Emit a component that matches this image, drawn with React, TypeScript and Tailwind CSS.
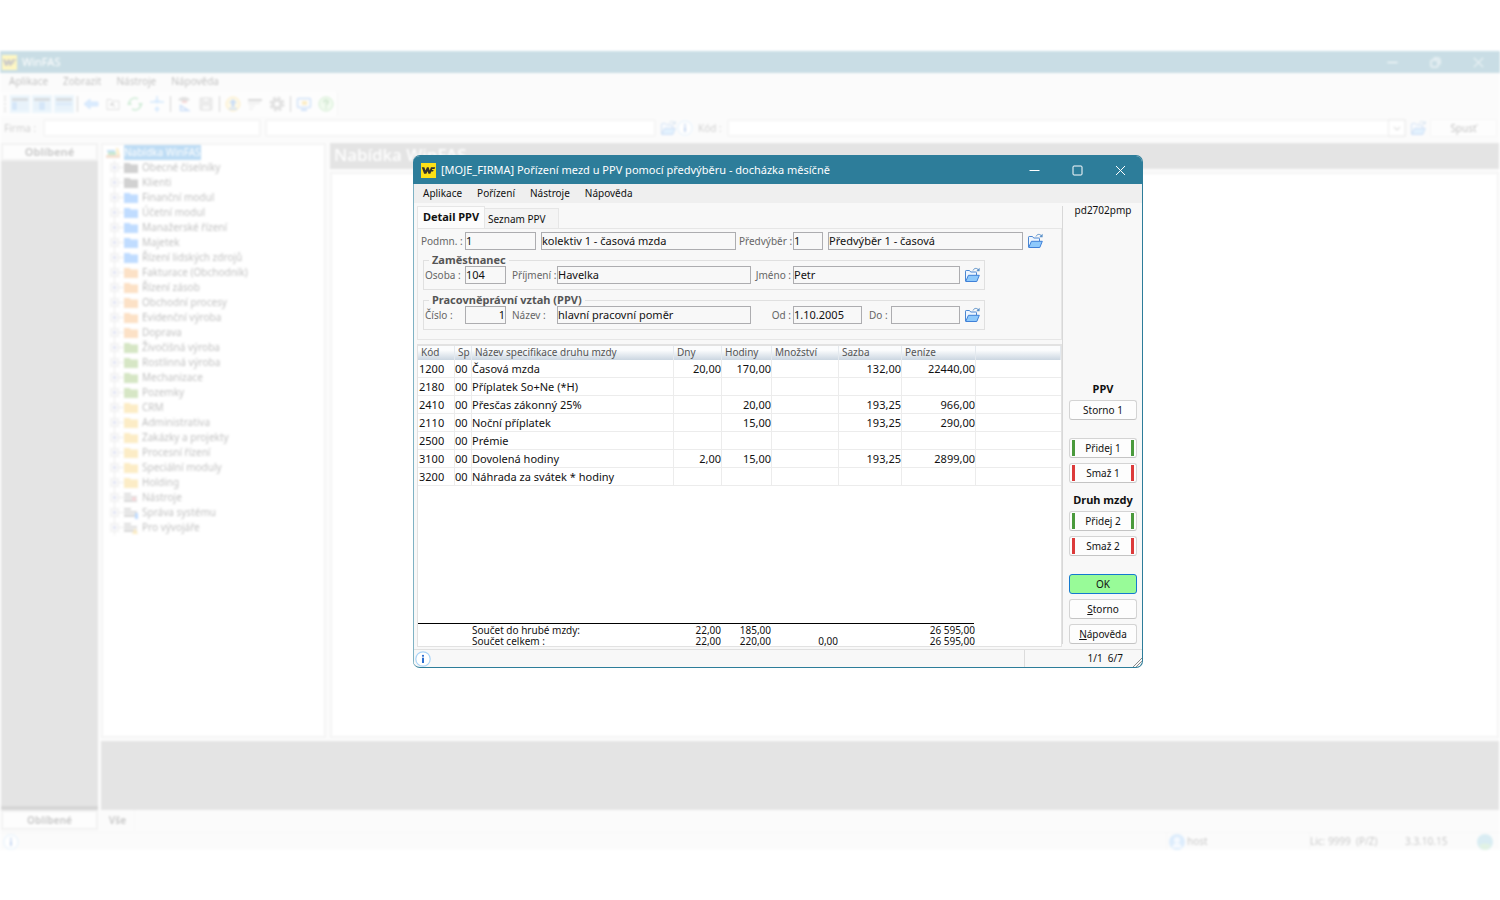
import React from "react";

function Logo({ className }: { className: string }) {
  return (
    <svg viewBox="0 0 16 16" className={className} aria-hidden="true">
      <rect width="16" height="16" fill="#fde016" />
      <path
        d="M.8 4.500h2.800l1.200 3.600 1.500-3.600h1.900l1.100 3.600 1.300-3.600h4.600l-.8 2h-2.400l-.4.900h1.900l-.7 1.700h-1.900l-.9 2.400H7.900L7.100 8.800 5.700 11.500H3.300z"
        fill="#33302a"
      />
    </svg>
  );
}

function OpenFolder() {
  return (
    <svg viewBox="0 0 16 16" className="size-4 shrink-0" fill="none" aria-hidden="true">
      <path d="M1.500 14V4.200q0-.7.7-.7h3.300l1.200 1.500h5.100q.7 0 .7.700V8" fill="#eef6ff" stroke="#4a86d2" />
      <path d="M1.700 14.500L4.400 8.300h10.900l-2.500 6.200z" fill="#8ec9fb" stroke="#3f80d8" strokeLinejoin="round" />
      <path d="M9 3.400C10.300.9 13 .7 14.500 3" stroke="#5a90c8" />
      <path d="M15.600.8v3.400h-3.400z" fill="#5a90c8" />
    </svg>
  );
}

function InfoIcon() {
  return (
    <svg viewBox="0 0 16 16" className="size-4 shrink-0" aria-hidden="true">
      <circle cx="8" cy="8" r="7.200" fill="#fff" stroke="#a9d4f7" strokeWidth="1.200" />
      <circle cx="8" cy="4.800" r="1.100" fill="#2c6fd0" />
      <rect x="7" y="6.700" width="2" height="5.300" fill="#2c6fd0" />
    </svg>
  );
}

function CaptionButtons({ restore }: { restore?: boolean }) {
  return (
    <div className="flex items-center text-white">
      <button type="button" aria-label="Minimalizovat" className="flex w-[43px] justify-center">
        <svg viewBox="0 0 11 11" className="size-[11px]" stroke="currentColor" fill="none"><path d="M.5 5.500h10" /></svg>
      </button>
      <button type="button" aria-label="Maximalizovat" className="flex w-[43px] justify-center">
        <svg viewBox="0 0 11 11" className="size-[11px]" stroke="currentColor" fill="none">
          {restore ? (
            <>
              <rect x="1" y="3" width="7" height="7" rx="1" />
              <path d="M3.500 1h4.500q2 0 2 2v4.500" />
            </>
          ) : (
            <rect x="1" y="1" width="9" height="9" rx="1" />
          )}
        </svg>
      </button>
      <button type="button" aria-label="Zavřít" className="flex w-[43px] justify-center">
        <svg viewBox="0 0 11 11" className="size-[11px]" stroke="currentColor" fill="none"><path d="M1 1l9 9M10 1l-9 9" /></svg>
      </button>
    </div>
  );
}

/* ---------- Main window ---------- */

type TreeItem = { label: string; color: string; kind?: "red" | "blue" | "yellow" };

const TREE: TreeItem[] = [
  { label: "Obecné číselníky", color: "#4a4a4a" },
  { label: "Klienti", color: "#4a4a4a" },
  { label: "Finanční modul", color: "#0a78ff" },
  { label: "Účetní modul", color: "#0a78ff" },
  { label: "Manažerské řízení", color: "#0a78ff" },
  { label: "Majetek", color: "#0a78ff" },
  { label: "Řízení lidských zdrojů", color: "#0a78ff" },
  { label: "Fakturace (Obchodník)", color: "#f58a1f" },
  { label: "Řízení zásob", color: "#f58a1f" },
  { label: "Obchodní procesy", color: "#f58a1f" },
  { label: "Evidenční výroba", color: "#f58a1f" },
  { label: "Doprava", color: "#f58a1f" },
  { label: "Živočišná výroba", color: "#5fa01c" },
  { label: "Rostlinná výroba", color: "#5fa01c" },
  { label: "Mechanizace", color: "#5fa01c" },
  { label: "Pozemky", color: "#5fa01c" },
  { label: "CRM", color: "#f5b81f" },
  { label: "Administrativa", color: "#f5b81f" },
  { label: "Zakázky a projekty", color: "#f5b81f" },
  { label: "Procesní řízení", color: "#f5b81f" },
  { label: "Speciální moduly", color: "#f5b81f" },
  { label: "Holding", color: "#f5b81f" },
  { label: "Nástroje", color: "#777", kind: "red" },
  { label: "Správa systému", color: "#777", kind: "blue" },
  { label: "Pro vývojáře", color: "#777", kind: "yellow" },
];

function TreeFolder({ item }: { item: TreeItem }) {
  if (!item.kind) {
    return (
      <svg viewBox="0 0 14 12" className="h-3 w-3.5 shrink-0" aria-hidden="true">
        <path d="M0 1h5.500l1.500 1.500h7V11H0z" fill={item.color} />
      </svg>
    );
  }
  return (
    <svg viewBox="0 0 14 12" className="h-3 w-3.5 shrink-0" aria-hidden="true">
      <path d="M0 1h7v2H0zM0 4h13v2H0zM0 7h13v3H0z" fill={item.color} />
      {item.kind === "red" && <circle cx="10" cy="7" r="2" fill="#f0606a" />}
      {item.kind === "blue" && <rect x="11" y="6" width="3" height="6" fill="#0a78ff" />}
      {item.kind === "yellow" && <path d="M8 12l3-6 3 6z" fill="#f5b81f" />}
    </svg>
  );
}

function Tree() {
  return (
    <nav className="w-[225px] shrink-0 border-2 border-[#d8d8d8] bg-white pl-[3px] text-[10px] leading-[15px]">
      <div className="flex items-center gap-1">
        <svg viewBox="0 0 14 12" className="h-3 w-3.5" aria-hidden="true">
          <path d="M1 3h8v2H1z" fill="#1d8fe0" />
          <path d="M2 5h8v3H2z" fill="#2ba84a" />
          <path d="M0 8h14v3H0z" fill="#d98a52" />
          <path d="M10 1h2l2 7h-3z" fill="#f5b81f" />
        </svg>
        <a href="#nabidka" className="bg-[#0078d7] text-white">Nabídka WinFAS</a>
      </div>
      <ul>
        {TREE.map((item) => (
          <li key={item.label} className="flex items-center pl-1">
            <svg viewBox="0 0 14 15" className="h-[15px] w-3.5 shrink-0" fill="none" aria-hidden="true">
              <path d="M4.500 0v4M4.500 11v4M8 7.500h6" stroke="#bbb" />
              <rect x="1" y="4" width="7" height="7" stroke="#aaa" fill="#fff" />
              <path d="M2.500 7.500h4M4.500 5.500v4" stroke="#5a6ac0" />
            </svg>
            <TreeFolder item={item} />
            <a href="#modul" className="pl-1 whitespace-nowrap text-black">{item.label}</a>
          </li>
        ))}
      </ul>
    </nav>
  );
}

function ToolIcon({ label, active, children }: { label: string; active?: boolean; children: React.ReactNode }) {
  return (
    <button
      type="button"
      aria-label={label}
      className={active ? "flex h-[18px] w-5 items-center justify-center bg-[#b5dcf5]" : "flex h-[18px] w-5 items-center justify-center"}
    >
      <svg viewBox="0 0 16 16" className="size-4" fill="none" aria-hidden="true">{children}</svg>
    </button>
  );
}

function Separator() {
  return <div className="mx-px h-4 w-px bg-[#555]" />;
}

function Toolbar() {
  return (
    <div className="flex h-6 w-[338px] items-center gap-[2px] border-r border-[#ddd] bg-[#fafafa] pl-1">
      <div className="mr-[2px] h-4 w-0 border-l-2 border-dotted border-[#999]" />
      <ToolIcon label="Panel vlevo" active>
        <path d="M0 2h16v3H0z" fill="#678" /><path d="M0 6h5v8H0z" fill="#5b9fe4" /><path d="M6 6h10v8H6z" fill="#a5cdee" />
      </ToolIcon>
      <ToolIcon label="Panel uprostřed" active>
        <path d="M0 2h16v3H0z" fill="#678" /><path d="M5 6h6v8H5z" fill="#5b9fe4" /><path d="M0 6h4v8H0zM12 6h4v8h-4z" fill="#a5cdee" />
      </ToolIcon>
      <ToolIcon label="Panel dole" active>
        <path d="M0 2h16v3H0z" fill="#678" /><path d="M0 6h16v4H0z" fill="#7db4e8" /><path d="M0 11h16v3H0z" fill="#a5cdee" />
      </ToolIcon>
      <Separator />
      <ToolIcon label="Zpět">
        <path d="M7 3v3h8v4H7v3L1 8z" fill="#6db3ff" stroke="#5b9ff0" />
      </ToolIcon>
      <ToolIcon label="O úroveň výš">
        <path d="M2 13.500V3.500h4l1 1.500h7v8.500z" stroke="#888" /><path d="M10 11L6 7.500M6 10V7.500h3" stroke="#444" />
      </ToolIcon>
      <ToolIcon label="Obnovit">
        <path d="M2 9a6 6 0 0 1 9-6M14 7a6 6 0 0 1-9 6" stroke="#4cb868" strokeWidth="1.500" /><path d="M11 7h5l-2.500 4zM0 9h5L2.500 5z" fill="#4cb868" />
      </ToolIcon>
      <ToolIcon label="Rozbalit vše">
        <path d="M8 0v5M8 11v5M1 6h14" stroke="#5aa8f4" strokeWidth="1.500" /><path d="M5 4l3 4 3-4zM5 14l3-4 3 4z" fill="#6db3ff" />
      </ToolIcon>
      <Separator />
      <ToolIcon label="Uživatel">
        <path d="M2 4c2-4 10-4 12 0l-3 1H5z" fill="#888" /><path d="M6 5h5v2H6z" fill="#e06565" /><path d="M4.500 9.500v5h8z" stroke="#3b84e8" strokeWidth="1.500" />
      </ToolIcon>
      <ToolIcon label="Uložit">
        <path d="M2 2h12v12H2z" fill="#bbb" stroke="#999" /><path d="M5 2h6v4H5zM4 9h8v5H4z" fill="#e6e6e6" stroke="#999" />
      </ToolIcon>
      <Separator />
      <ToolIcon label="Stáhnout">
        <circle cx="8" cy="8" r="7" fill="#ffe9a0" stroke="#f5b81f" /><path d="M8 3l4 4H9.500v4h-3V7H4zM4 12h8v1.500H4z" fill="#2c7be0" />
      </ToolIcon>
      <ToolIcon label="Seznam">
        <path d="M1 4h14" stroke="#666" strokeWidth="2" /><path d="M1 7h12" stroke="#888" /><path d="M2 10h6M2 13h4" stroke="#aaa" />
      </ToolIcon>
      <ToolIcon label="Nastavení">
        <circle cx="8" cy="8" r="4" stroke="#888" strokeWidth="3" /><circle cx="8" cy="8" r="6.500" stroke="#888" strokeWidth="2" strokeDasharray="3 2.100" />
      </ToolIcon>
      <Separator />
      <ToolIcon label="Vzdálená pomoc">
        <rect x="1.500" y="2.500" width="13" height="9" rx="1" stroke="#4b8fe8" strokeWidth="1.500" /><path d="M6 5h5v4H6z" fill="#f5b81f" /><path d="M5 14h6" stroke="#4b8fe8" strokeWidth="2" />
      </ToolIcon>
      <ToolIcon label="Nápověda">
        <circle cx="8" cy="8" r="7" fill="#c9f0c4" stroke="#4cb648" /><path d="M6 6.500c0-3 4-3 4-.5 0 1.500-2 1.500-2 3.500M8 11v1.500" stroke="#2f9130" strokeWidth="1.500" />
      </ToolIcon>
    </div>
  );
}

function MainWindow() {
  const box = "h-[18px] border-2 border-[#dcdcdc] bg-white";
  return (
    <div className="flex min-h-0 flex-1 flex-col bg-[#f3f3f3] text-[10px] text-black opacity-25 blur-[1px]">
      <header className="flex h-[22px] shrink-0 items-center bg-[#2d7d9a] pl-0.5 text-[11px] text-white">
        <Logo className="size-[15px]" />
        <span className="flex-1 pl-[5px]">WinFAS</span>
        <CaptionButtons restore />
      </header>
      <nav className="flex h-[18px] shrink-0 items-center gap-[15px] pb-0.5 pl-[9px]">
        <button type="button">Aplikace</button>
        <button type="button">Zobrazit</button>
        <button type="button">Nástroje</button>
        <button type="button">Nápověda</button>
      </nav>
      <div className="pt-px"><Toolbar /></div>
      <div className="flex h-6 shrink-0 items-center pr-[3px] pl-1">
        <label htmlFor="firma" className="w-[39px] text-[#444]">Firma :</label>
        <input id="firma" className={`${box} w-[218px]`} />
        <input aria-label="Název firmy" className={`${box} ml-1 w-[391px]`} />
        <div className="flex w-[71px] items-center pl-1">
          <OpenFolder />
          <span className="w-px" />
          <InfoIcon />
          <label htmlFor="kod" className="pl-[5px] text-[#444]">Kód :</label>
        </div>
        <div className="grid flex-1">
          <select id="kod" className={`${box} col-start-1 row-start-1 w-full appearance-none`} />
          <svg viewBox="0 0 18 18" className="pointer-events-none col-start-1 row-start-1 size-[18px] justify-self-end" fill="none" aria-hidden="true">
            <rect x=".5" y=".5" width="17" height="17" stroke="#bbb" />
            <path d="M6 8l3 3 3-3" stroke="#444" />
          </svg>
        </div>
        <div className="flex w-6 justify-center"><OpenFolder /></div>
        <button type="button" className="h-[18px] w-[67px] border border-[#ddd] bg-[#fbfbfb]">Spusť</button>
      </div>
      <div className="flex min-h-0 flex-1 gap-[3px] pt-[3px] pr-px pl-px">
        <aside className="flex w-[97px] shrink-0 flex-col text-center font-bold text-[#333]">
          <div className="h-[18px] border-2 border-[#ccc] bg-[#fbfbfb] text-[11px] leading-[14px]">Oblíbené</div>
          <div className="flex-1 bg-[#979797]" />
          <div className="h-1 bg-[#606060]" />
          <div className="h-5 border-2 border-[#ccc] bg-[#fbfbfb] leading-4">Oblíbené</div>
        </aside>
        <div className="flex min-w-0 flex-1 flex-col">
          <div className="flex min-h-0 flex-1 gap-1">
            <Tree />
            <div className="flex min-w-0 flex-1 flex-col gap-[3px]">
              <h1 className="h-[26px] bg-[#979797] pl-1 text-[17px] leading-6 font-medium text-white">Nabídka WinFAS</h1>
              <div className="flex-1 border-2 border-[#d8d8d8] bg-white" />
            </div>
          </div>
          <div className="mt-[3px] h-[69px] bg-[#979797]" />
          <button type="button" className="h-5 w-[34px] border-r border-[#ddd] font-bold text-[#333]">Vše</button>
        </div>
      </div>
      <footer className="mt-0.5 flex h-[18px] shrink-0 items-center border-t border-[#ddd] pr-[7px] pl-[3px] text-[#222]">
        <InfoIcon />
        <span className="flex-1" />
        <div className="flex w-[143px] items-center gap-0.5 border-l border-[#ddd] pl-0.5">
          <svg viewBox="0 0 16 16" className="size-4" aria-hidden="true">
            <circle cx="8" cy="8" r="8" fill="#7ab8f5" /><circle cx="8" cy="6" r="3" fill="#d8eaff" /><path d="M3 14q1-5 5-5t5 5z" fill="#d8eaff" />
          </svg>
          host
        </div>
        <span className="w-[96px] border-l border-[#ddd]">Lic: 9999&nbsp; (P/Z)</span>
        <span className="w-[72px]">3.3.10.15</span>
        <svg viewBox="0 0 16 16" className="size-4" aria-hidden="true">
          <circle cx="8" cy="8" r="8" fill="#6bb7d0" /><path d="M2 11q6-3 12 0-2 5-6 5t-6-5z" fill="#8ccf98" />
        </svg>
      </footer>
    </div>
  );
}

/* ---------- Dialog ---------- */

function Field({ id, label, value, labelClass, inputClass }: { id: string; label: string; value: string; labelClass: string; inputClass: string }) {
  return (
    <>
      <label htmlFor={id} className={`shrink-0 whitespace-nowrap text-[10px] text-[#666] ${labelClass}`}>{label}</label>
      <TextBox id={id} value={value} className={inputClass} />
    </>
  );
}

function TextBox({ id, value, className, label }: { id: string; value: string; className: string; label?: string }) {
  return (
    <input
      id={id}
      aria-label={label}
      defaultValue={value}
      readOnly
      className={`h-[18px] shrink-0 border border-[#adadb0] bg-[#f8f8f8] p-0 pb-px text-[11px] leading-4 text-[#111] outline-none ${className}`}
    />
  );
}

function Lookup({ label }: { label: string }) {
  return <button type="button" aria-label={label} className="ml-1 shrink-0"><OpenFolder /></button>;
}

const ROWS = [
  ["1200", "00", "Časová mzda", "20,00", "170,00", "", "132,00", "22440,00"],
  ["2180", "00", "Příplatek So+Ne (*H)", "", "", "", "", ""],
  ["2410", "00", "Přesčas zákonný 25%", "", "20,00", "", "193,25", "966,00"],
  ["2110", "00", "Noční příplatek", "", "15,00", "", "193,25", "290,00"],
  ["2500", "00", "Prémie", "", "", "", "", ""],
  ["3100", "00", "Dovolená hodiny", "2,00", "15,00", "", "193,25", "2899,00"],
  ["3200", "00", "Náhrada za svátek * hodiny", "", "", "", "", ""],
];

const HEADS = ["Kód", "Sp", "Název specifikace druhu mzdy", "Dny", "Hodiny", "Množství", "Sazba", "Peníze", ""];

const TOTALS = [
  ["Součet do hrubé mzdy:", "22,00", "185,00", "", "", "26 595,00"],
  ["Součet celkem :", "22,00", "220,00", "0,00", "", "26 595,00"],
];

function Columns() {
  return (
    <colgroup>
      <col className="w-[37px]" />
      <col className="w-[17px]" />
      <col className="w-[202px]" />
      <col className="w-[48px]" />
      <col className="w-[50px]" />
      <col className="w-[67px]" />
      <col className="w-[63px]" />
      <col className="w-[74px]" />
      <col />
    </colgroup>
  );
}

function WageGrid() {
  return (
    <div className="flex min-h-[303px] flex-col border border-t-2 border-[#e2e2e2] bg-white">
      <table className="w-full table-fixed border-separate border-spacing-0">
        <Columns />
        <thead>
          <tr className="h-[14px] bg-linear-to-b from-[#fbfcfd] from-30% to-[#cbd6e1] text-left text-[10px] leading-[13px] text-[#555]">
            {HEADS.map((h, i) => (
              <th key={i} scope="col" className="border-r border-[#e4e9ee] p-0 pl-[3px] align-top font-normal whitespace-nowrap">{h}</th>
            ))}
          </tr>
        </thead>
        <tbody className="text-[11px] leading-[17px] text-[#111]">
          {ROWS.map((row) => (
            <tr key={row[0]} className="h-[18px]">
              {row.map((cell, i) => (
                <td key={i} className={`border-r border-b border-[#ececec] p-0 whitespace-nowrap ${i > 2 ? "text-right" : i === 0 ? "pl-px" : ""}`}>{cell}</td>
              ))}
              <td className="border-b border-[#ececec] p-0" />
            </tr>
          ))}
        </tbody>
      </table>
      <div className="flex-1" />
      <div className="h-px w-[556px] bg-black" />
      <table className="-mb-px mt-px w-full table-fixed border-collapse text-[10px] leading-[11px] text-[#111]">
        <Columns />
        <tbody>
          {TOTALS.map((row) => (
            <tr key={row[0]}>
              <td className="p-0" />
              <td className="p-0" />
              {row.map((cell, i) => (
                <td key={i} className={`p-0 whitespace-nowrap ${i > 0 ? "pr-px text-right" : ""}`}>{cell}</td>
              ))}
              <td className="p-0" />
            </tr>
          ))}
        </tbody>
      </table>
    </div>
  );
}

function SideButton({ children, bar, primary }: { children: React.ReactNode; bar?: "green" | "red"; primary?: boolean }) {
  const barClass = bar === "green" ? "bg-[#4a9a3c]" : "bg-[#dc3a3a]";
  return (
    <button
      type="button"
      className={
        primary
          ? "flex h-5 w-full items-center justify-center rounded-[3px] border border-[#1479cf] bg-[#98fb98] text-[10px] text-[#111]"
          : "flex h-5 w-full items-center rounded-[3px] border border-[#d4d4d4] border-b-[#c4c4c4] bg-[#fdfdfd] px-0.5 text-[10px] text-[#111]"
      }
    >
      {bar && <span className={`h-4 w-[3px] ${barClass}`} />}
      <span className="flex-1">{children}</span>
      {bar && <span className={`h-4 w-[3px] ${barClass}`} />}
    </button>
  );
}

function Dialog() {
  return (
    <section
      role="dialog"
      aria-label="Pořízení mezd"
      className="absolute top-[155px] left-[413px] w-[730px] overflow-hidden rounded-[7px] border border-l-0 border-[#2d7d9a] bg-[#f8f8f8] text-[#111]"
    >
      <header className="flex h-7 items-center bg-[#2d7d9a] pl-2 text-white">
        <Logo className="size-[15px]" />
        <h2 className="flex-1 pl-[5px] text-[11px] whitespace-nowrap">[MOJE_FIRMA] Pořízení mezd u PPV pomocí předvýběru - docházka měsíčně</h2>
        <CaptionButtons />
      </header>
      <div className="border-l border-[#7fb2c4]">
        <nav className="flex h-[19px] items-center gap-[15px] bg-[#efefef] pl-[9px] text-[10px]">
          <button type="button">Aplikace</button>
          <button type="button">Pořízení</button>
          <button type="button">Nástroje</button>
          <button type="button">Nápověda</button>
        </nav>
        <div className="flex pt-[3px]">
          <main className="w-[648px] pl-[3px]">
            <div role="tablist" className="flex h-[22px] items-end">
              <button type="button" role="tab" aria-selected="true" className="h-[22px] w-[68px] border border-b-0 border-[#e6e6e6] bg-[#fcfcfc] pb-0.5 text-[11px] leading-[17px] font-bold">Detail PPV</button>
              <button type="button" role="tab" aria-selected="false" className="h-5 w-[74px] border border-b-0 border-l-0 border-[#e6e6e6] bg-[#f4f4f4] pt-px pl-[3px] text-left text-[10px]">Seznam PPV</button>
            </div>
            <form className="mb-1 border border-[#e6e6e6] pt-[3px] pb-[9px] pl-[3px]" onSubmit={(e) => e.preventDefault()}>
              <div className="flex items-center">
                <Field id="podmn" label="Podmn. :" value="1" labelClass="w-[44px]" inputClass="w-[71px]" />
                <TextBox id="podmn-nazev" label="Název podmnožiny" value="kolektiv 1 - časová mzda" className="ml-[5px] w-[195px]" />
                <Field id="predvyber" label="Předvýběr :" value="1" labelClass="w-[57px] pl-[3px]" inputClass="w-[30px]" />
                <TextBox id="predvyber-nazev" label="Název předvýběru" value="Předvýběr 1 - časová" className="ml-[5px] w-[195px]" />
                <Lookup label="Vybrat předvýběr" />
              </div>
              <fieldset className="mt-1 ml-0.5 w-[562px] border border-[#e0e0e0] pb-[5px]">
                <legend className="ml-[5px] px-[3px] text-[11px] leading-[12px] font-bold text-[#555]">Zaměstnanec</legend>
                <div className="flex items-center">
                  <Field id="osoba" label="Osoba :" value="104" labelClass="w-[41px] pl-px" inputClass="w-[41px]" />
                  <Field id="prijmeni" label="Příjmení :" value="Havelka" labelClass="w-[51px] pl-1.5" inputClass="w-[194px]" />
                  <Field id="jmeno" label="Jméno :" value="Petr" labelClass="w-[42px] pr-0.5 text-right" inputClass="w-[167px]" />
                  <Lookup label="Vybrat zaměstnance" />
                </div>
              </fieldset>
              <fieldset className="mt-1 ml-0.5 w-[562px] border border-[#e0e0e0] pb-[5px]">
                <legend className="ml-[5px] px-[3px] text-[11px] leading-[12px] font-bold text-[#555]">Pracovněprávní vztah (PPV)</legend>
                <div className="flex items-center">
                  <Field id="cislo" label="Číslo :" value="1" labelClass="w-[41px] pl-px" inputClass="w-[41px] text-right" />
                  <Field id="nazev" label="Název :" value="hlavní pracovní poměr" labelClass="w-[51px] pl-1.5" inputClass="w-[194px]" />
                  <Field id="od" label="Od :" value="1.10.2005" labelClass="w-[42px] pr-0.5 text-right" inputClass="w-[69px]" />
                  <Field id="do" label="Do :" value="" labelClass="w-[29px] pl-[7px]" inputClass="w-[69px]" />
                  <Lookup label="Vybrat pracovní vztah" />
                </div>
              </fieldset>
            </form>
            <WageGrid />
          </main>
          <aside className="mb-[3px] flex flex-1 flex-col border-l border-[#d8d8d8] pr-[5px] pl-1.5 text-center text-[11px]">
            <div className="text-[10px] leading-[9px]">pd2702pmp</div>
            <div className="flex flex-1 flex-col justify-end gap-[5px]">
              <div className="leading-[12px] font-bold">PPV</div>
              <SideButton>Storno 1</SideButton>
              <div className="h-2" />
              <SideButton bar="green">Přidej 1</SideButton>
              <SideButton bar="red">Smaž 1</SideButton>
              <div className="pt-1.5 leading-[12px] font-bold">Druh mzdy</div>
              <SideButton bar="green">Přidej 2</SideButton>
              <SideButton bar="red">Smaž 2</SideButton>
              <div className="h-2" />
              <SideButton primary>OK</SideButton>
              <SideButton><u>S</u>torno</SideButton>
              <SideButton><u>N</u>ápověda</SideButton>
            </div>
          </aside>
        </div>
        <footer className="mt-0.5 flex h-[18px] items-center border-t border-[#e0e0e0] pl-px text-[10px]">
          <InfoIcon />
          <span className="flex-1" />
          <div className="flex h-full w-[118px] items-end justify-end border-l border-[#dcdcdc]">
            <span className="self-center pr-2.5">1/1&nbsp; 6/7</span>
            <svg viewBox="0 0 9 9" className="size-[9px]" aria-hidden="true">
              <path d="M0 9L9 0M3 9l6-6M6 9l3-3" stroke="#8a8a8a" />
            </svg>
          </div>
        </footer>
      </div>
    </section>
  );
}

export default function App() {
  return (
    <div className="relative flex h-screen min-h-[720px] flex-col overflow-hidden bg-white pt-[51px] pb-[50px] font-['Noto_Sans','Open_Sans',sans-serif]">
      <MainWindow />
      <Dialog />
    </div>
  );
}
